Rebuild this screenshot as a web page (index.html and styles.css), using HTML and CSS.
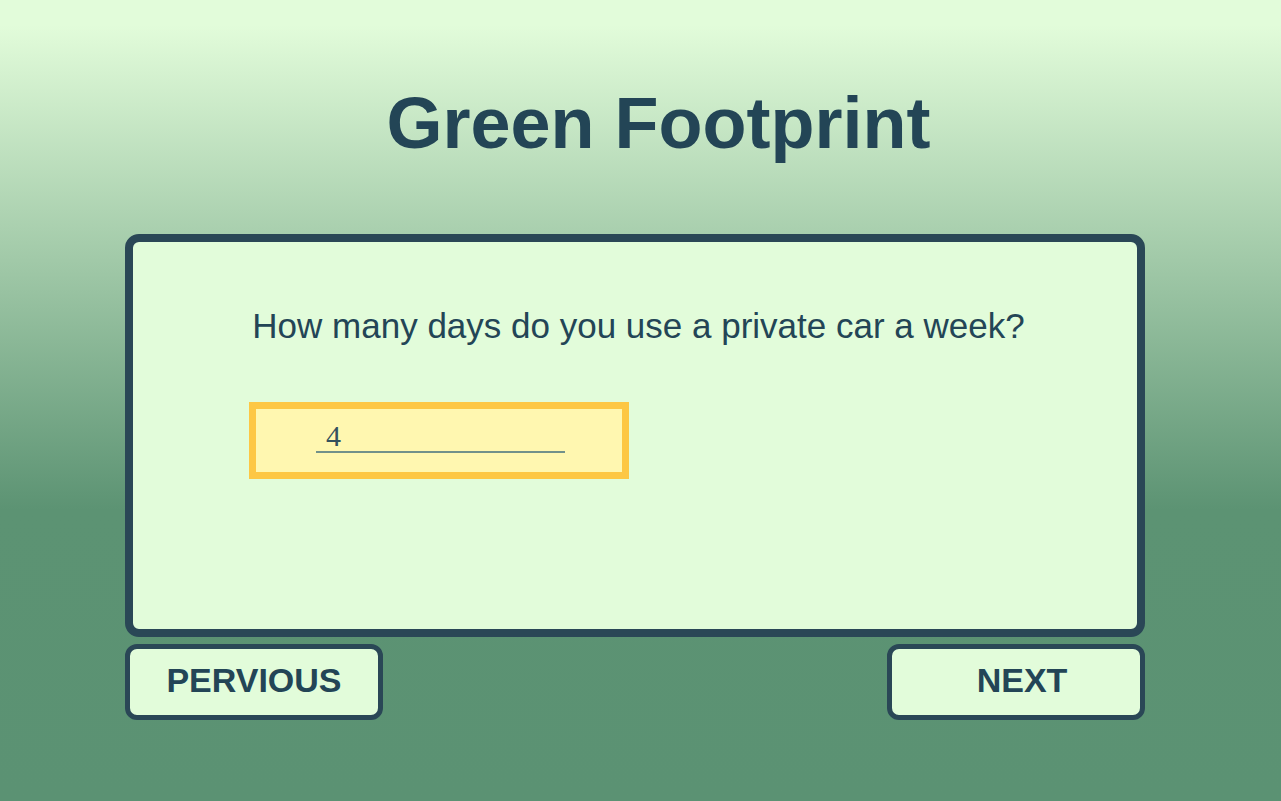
FILE: index.html
```html
<!DOCTYPE html>
<html lang="en">
<head>
<meta charset="utf-8">
<title>Green Footprint</title>
<link rel="stylesheet" href="styles.css">
</head>
<body>
  <main class="page">
    <h1 class="title">Green Footprint</h1>
    <section class="card">
      <p class="question">How many days do you use a private car a week?</p>
      <div class="answer-box">
        <input class="answer" type="text" value="4">
      </div>
    </section>
    <nav class="nav-row">
      <button class="nav-btn">PERVIOUS</button>
      <button class="nav-btn nav-next">NEXT</button>
    </nav>
  </main>
</body>
</html>
```
FILE: styles.css
```css
html, body {
  margin: 0;
  padding: 0;
}
body {
  min-height: 801px;
  font-family: "Liberation Sans", Arial, sans-serif;
  color: #234556;
  background: linear-gradient(to bottom,
    #e2fcda 0px,
    #e2fcda 25px,
    #5c9373 510px,
    #5b9273 801px);
  background-repeat: no-repeat;
  background-color: #5b9273;
}
.page {
  padding-top: 87px;
  display: flex;
  flex-direction: column;
}
.title {
  margin: 0;
  padding-left: 36px;
  text-align: center;
  font-size: 72px;
  line-height: 72px;
  font-weight: 700;
  color: #234556;
}
.card {
  box-sizing: border-box;
  margin: 75px 0 0 125px;
  width: 1020px;
  height: 403px;
  border: 8px solid #2a4756;
  border-radius: 14px;
  background: #e2fcda;
  padding-top: 66px;
}
.question {
  margin: 0;
  padding-left: 7px;
  text-align: center;
  font-size: 35px;
  line-height: 35px;
  color: #234556;
}
.answer-box {
  box-sizing: border-box;
  margin: 59px 0 0 116px;
  width: 380px;
  height: 77px;
  border: 7px solid #fdc744;
  background: #fff7b0;
  padding: 12px 0 0 60px;
}
.answer {
  box-sizing: border-box;
  display: block;
  width: 249px;
  height: 32px;
  margin: 0;
  padding: 0 0 0 10px;
  border: none;
  border-bottom: 2px solid #72918a;
  background: transparent;
  font-family: "Liberation Serif", "Times New Roman", serif;
  font-size: 30px;
  font-weight: 300;
  line-height: 30px;
  color: #34515e;
  outline: none;
}
.nav-row {
  margin: 7px 0 0 125px;
  width: 1020px;
  display: flex;
  justify-content: space-between;
}
.nav-btn {
  box-sizing: border-box;
  width: 258px;
  height: 76px;
  border: 5px solid #2a4756;
  border-radius: 12px;
  background: #e2fcda;
  font-family: "Liberation Sans", Arial, sans-serif;
  font-weight: 700;
  font-size: 34px;
  color: #234556;
  padding: 0 0 3px 0;
  display: flex;
  align-items: center;
  justify-content: center;
}
.nav-next {
  padding-left: 12px;
}
```
